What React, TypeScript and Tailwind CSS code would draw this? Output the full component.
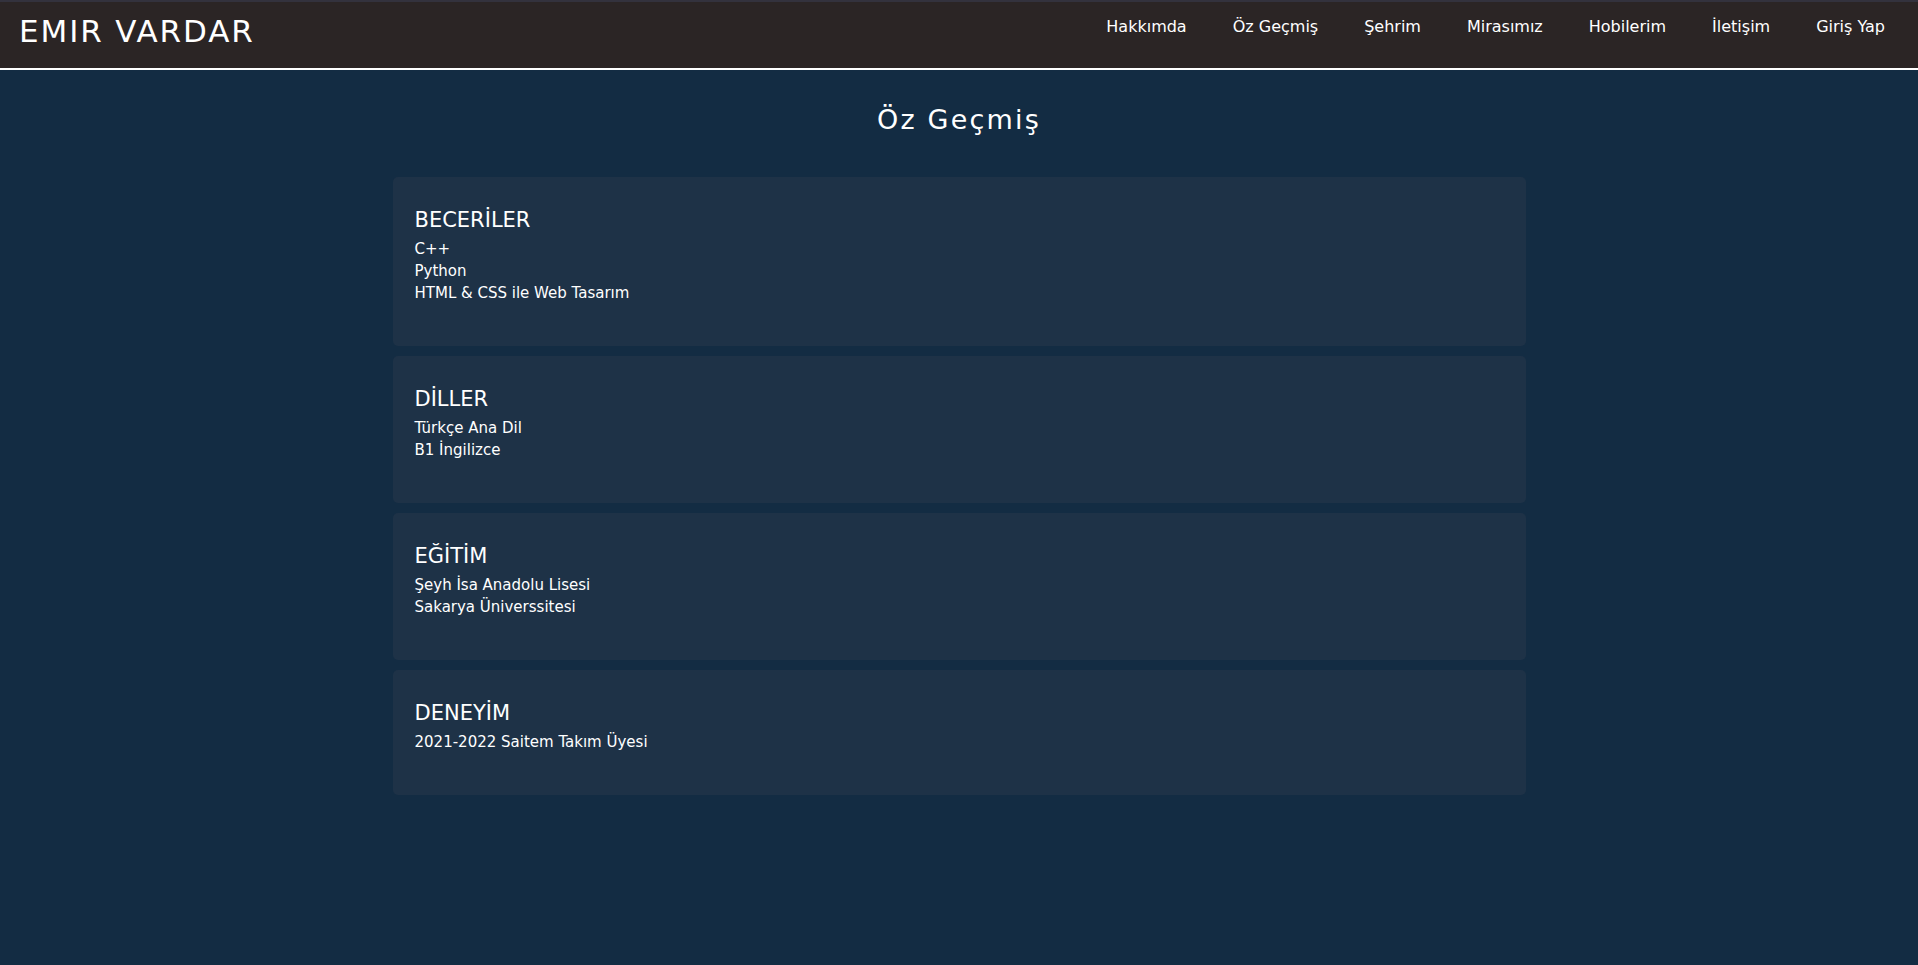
import React from "react";

const font = { fontFamily: '"DejaVu Sans", "Open Sans", sans-serif' };

const navItems = ["Hakkımda", "Öz Geçmiş", "Şehrim", "Mirasımız", "Hobilerim", "İletişim", "Giriş Yap"];

const sections: { title: string; items: string[] }[] = [
  { title: "BECERİLER", items: ["C++", "Python", "HTML & CSS ile Web Tasarım"] },
  { title: "DİLLER", items: ["Türkçe Ana Dil", "B1 İngilizce"] },
  { title: "EĞİTİM", items: ["Şeyh İsa Anadolu Lisesi", "Sakarya Üniverssitesi"] },
  { title: "DENEYİM", items: ["2021-2022 Saitem Takım Üyesi"] },
];

export default function App() {
  return (
    <div className="min-h-screen bg-[#132c43] text-white" style={font}>
      <header className="border-t-2 border-t-[#33323d] border-b-2 border-b-white bg-[#2b2525] h-[70px] flex items-start justify-between pt-[11px] pl-[19px] pr-[33px]">
        <div className="text-[31px] leading-[36px] tracking-[1.9px] text-white">EMIR VARDAR</div>
        <nav className="flex gap-[46px] mt-[2px] text-[16px] leading-[24px] text-white">
          {navItems.map((n) => (
            <a key={n} className="cursor-pointer whitespace-nowrap">{n}</a>
          ))}
        </nav>
      </header>
      <main className="pb-10">
        <h1 className="text-center text-[27px] leading-[32px] tracking-[2.2px] mt-[34px] mb-[41px]">Öz Geçmiş</h1>
        <div className="max-w-[1133px] mx-auto flex flex-col gap-[10px]">
          {sections.map((s) => (
            <section key={s.title} className="bg-[#1e3247] rounded-[5px] pl-[22px] pr-5 pt-[29px] pb-[42px]">
              <h3 className="text-[21px] leading-[28px] mb-[4px] text-white">{s.title}</h3>
              <ul>
                {s.items.map((it) => (
                  <li key={it} className="text-[15px] leading-[22px] text-white">{it}</li>
                ))}
              </ul>
            </section>
          ))}
        </div>
      </main>
    </div>
  );
}
